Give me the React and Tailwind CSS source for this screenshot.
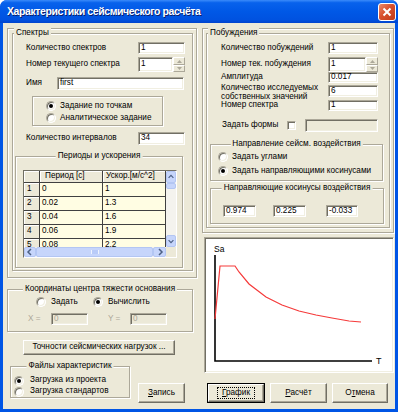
import React from 'react';

const edge = 'border border-t-[#ACA899] border-l-[#ACA899] border-b-white border-r-white shadow-[inset_1px_1px_0_#716F64,inset_-1px_-1px_0_#F1EFE2]';

function Group({ label, center, className = '', children }) {
  return (
    <div className={`relative border border-[#ACA899] shadow-[inset_1px_1px_0_#fff,1px_1px_0_#fff] ${className}`}>
      {label && (
        <span
          className={`absolute -top-[6px] bg-[#ECE9D8] px-[2px] leading-[10px] whitespace-nowrap ${
            center ? 'left-1/2 -translate-x-1/2' : 'left-[1px]'
          }`}
        >
          {label}
        </span>
      )}
      {children}
    </div>
  );
}

function Edit({ value = '', disabled, className = '' }) {
  return (
    <div
      className={`${edge} flex items-center pl-[2px] overflow-hidden whitespace-nowrap ${
        disabled ? 'bg-[#ECE9D8] text-[#ACA899]' : 'bg-white'
      } ${className}`}
    >
      {value}
    </div>
  );
}

function Radio({ checked }) {
  return (
    <div className="w-[10px] h-[10px] shrink-0 rounded-full bg-white border border-t-[#ACA899] border-l-[#ACA899] border-b-white border-r-white shadow-[inset_1px_1px_0_#716F64,inset_-1px_-1px_0_#F1EFE2] flex items-center justify-center">
      {checked && <div className="w-[4px] h-[4px] rounded-full bg-black" />}
    </div>
  );
}

function Btn({ children, def, className = '' }) {
  const face = (
    <div className="flex-1 self-stretch flex items-center justify-center bg-[#ECE9D8] border border-t-white border-l-white border-b-[#716F64] border-r-[#716F64] shadow-[inset_-1px_-1px_0_#ACA899]">
      {def ? <span className="border border-dotted border-black px-[4px] leading-[10px]">{children}</span> : children}
    </div>
  );
  return (
    <div className={`flex ${def ? 'border border-black' : ''} ${className}`}>{face}</div>
  );
}

function SpinHalf({ up, h }) {
  return (
    <div className={`${h} flex items-center justify-center bg-[#ECE9D8] border border-t-white border-l-white border-b-[#ACA899] border-r-[#ACA899]`}>
      <svg width="5" height="3" viewBox="0 0 5 3">
        <path d={up ? 'M0 3 L2.5 0 L5 3 Z' : 'M0 0 L2.5 3 L5 0 Z'} fill="#ACA899" />
      </svg>
    </div>
  );
}

function Spin() {
  return (
    <div className="w-[12px] h-[15px] flex flex-col">
      <SpinHalf up h="h-[8px]" />
      <SpinHalf h="h-[7px]" />
    </div>
  );
}

function ScrollBtn({ dir, className = '' }) {
  const d = {
    up: 'M2 6 L5 3 L8 6',
    down: 'M2 4 L5 7 L8 4',
    left: 'M6 2 L3 5 L6 8',
    right: 'M4 2 L7 5 L4 8',
  }[dir];
  return (
    <div className={`rounded-[2px] bg-[#C6D5FB] border border-[#B3C6F3] flex items-center justify-center ${className}`}>
      <svg width="10" height="10" viewBox="0 0 10 10">
        <path d={d} fill="none" stroke="#4D6185" strokeWidth="1.5" />
      </svg>
    </div>
  );
}

function Grid() {
  const rows = [
    ['1', '0', '1'],
    ['2', '0.02', '1.3'],
    ['3', '0.04', '1.6'],
    ['4', '0.06', '1.9'],
    ['5', '0.08', '2.2'],
  ];
  const hd = 'bg-[#ECE9D8] border-r border-b border-[#404040] shadow-[inset_1px_1px_0_#fff] flex items-center';
  const cell = 'bg-[#FFFDE3] border-r border-b border-[#404040] flex items-center pl-[2px]';
  return (
    <div className="w-[154px] h-[88px] border border-t-[#716F64] border-l-[#716F64] border-b-white border-r-white flex flex-col bg-[#ECE9D8]">
      <div className="flex h-[76px]">
        <div className="w-[142px] h-[76px] overflow-hidden bg-white">
          <div className="flex h-[12px]">
            <div className={`${hd} w-[16px]`} />
            <div className={`${hd} w-[63px] pl-[5px]`}>Период [c]</div>
            <div className={`${hd} w-[63px] pl-[3px]`}>Ускор.[м/с^2]</div>
          </div>
          {rows.map((r) => (
            <div key={r[0]} className="flex h-[14px]">
              <div className={`${hd} w-[16px] pl-[3px]`}>{r[0]}</div>
              <div className={`${cell} w-[63px]`}>{r[1]}</div>
              <div className={`${cell} w-[63px]`}>{r[2]}</div>
            </div>
          ))}
        </div>
        <div className="w-[10px] h-[76px] flex flex-col bg-[#F4F3EE]">
          <ScrollBtn dir="up" className="h-[12px]" />
          <div className="h-[6px] rounded-[2px] bg-[#C6D5FB] border border-[#B3C6F3]" />
          <div className="flex-1" />
          <ScrollBtn dir="down" className="h-[12px]" />
        </div>
      </div>
      <div className="flex h-[10px]">
        <div className="w-[142px] flex bg-[#F4F3EE]">
          <ScrollBtn dir="left" className="w-[12px]" />
          <div className="flex-1 rounded-[2px] bg-[#C6D5FB] border border-[#B3C6F3] flex items-center justify-center">
            <div className="w-[8px] h-[4px] border-x border-[#EEF3FE] bg-[#B9CBF8]" />
          </div>
          <ScrollBtn dir="right" className="w-[13px]" />
        </div>
        <div className="w-[10px] bg-[#ECE9D8]" />
      </div>
    </div>
  );
}

function Chart() {
  const curve = [
    [216, 320], [221, 267], [236, 267], [240, 273], [250, 285], [267, 298], [283, 306],
    [300, 312], [317, 316], [333, 319], [350, 322], [362, 323],
  ];
  return (
    <div className={`${edge} ml-[2px] mt-[4px] w-[190px] h-[136px] bg-white`}>
      <svg width="186" height="132" viewBox="206 239 186 132" className="block">
        <text x="215" y="253" fontSize="8.5" fontFamily="Liberation Sans, Arial, sans-serif">Sa</text>
        <path d="M216 256 V362 H373" fill="none" stroke="#000" strokeWidth="1.6" />
        <text x="377" y="365" fontSize="9" fontFamily="Liberation Sans, Arial, sans-serif">T</text>
        <polyline points={curve.map((p) => p.join(',')).join(' ')} fill="none" stroke="#F53A3A" strokeWidth="1.2" />
      </svg>
    </div>
  );
}

export default function App() {
  return (
    <div className="w-[398px] h-[412px] flex flex-col rounded-t-[7px] overflow-hidden bg-[#0055E5] font-['Liberation_Sans',Arial,sans-serif] text-[8.2px] leading-none text-black">
      {/* title bar */}
      <div className="h-[23px] flex items-center justify-between pl-[7px] pr-[2px] bg-[linear-gradient(#3B8BFA_0%,#0862EC_12%,#0058E6_50%,#0052E0_85%,#0043CE_100%)]">
        <span className="text-white font-bold text-[10.5px] tracking-[-0.4px] [text-shadow:1px_1px_0_#0A1E6B]">
          Характеристики сейсмического расчёта
        </span>
        <div className="w-[18px] h-[18px] rounded-[3px] border border-white bg-[linear-gradient(135deg,#EA8A6C,#D8512E_45%,#C23B18)] flex items-center justify-center">
          <svg width="10" height="10" viewBox="0 0 10 10">
            <path d="M1.5 1.5 L8.5 8.5 M8.5 1.5 L1.5 8.5" stroke="#fff" strokeWidth="2" />
          </svg>
        </div>
      </div>

      {/* client */}
      <div className="mx-[3px] h-[386px] bg-[#ECE9D8] flex pl-[4px] pt-[5px]">
        {/* left column */}
        <div className="w-[190px] flex flex-col">
          <div className="h-[250px] border border-[#ACA899] shadow-[inset_1px_1px_0_#fff,1px_1px_0_#fff] pl-[4px] pt-[4px]">
            <Group label="Спектры" className="w-[181px] h-[238px] flex flex-col">
              <div className="mt-[8px] h-[12px] flex items-center pl-[13px]">
                <span className="w-[112px]">Количество спектров</span>
                <Edit value="1" className="w-[47px] h-[12px]" />
              </div>
              <div className="mt-[3px] h-[15px] flex items-center pl-[13px]">
                <span className="w-[112px]">Номер текущего спектра</span>
                <Edit value="1" className="w-[35px] h-[15px]" />
                <Spin />
              </div>
              <div className="mt-[5px] h-[13px] flex items-center pl-[13px]">
                <span className="w-[31px]">Имя</span>
                <Edit value="first" className="w-[127px] h-[13px]" />
              </div>
              <Group className="mt-[6px] ml-[19px] w-[131px] h-[30px] flex flex-col pt-[3px] pl-[13px]">
                <div className="h-[12px] flex items-center gap-[4px]">
                  <Radio checked />
                  <span>Задание по точкам</span>
                </div>
                <div className="h-[12px] flex items-center gap-[4px]">
                  <Radio />
                  <span>Аналитическое задание</span>
                </div>
              </Group>
              <div className="mt-[6px] h-[13px] flex items-center pl-[13px]">
                <span className="w-[112px]">Количество интервалов</span>
                <Edit value="34" className="w-[47px] h-[13px]" />
              </div>
              <Group label="Периоды и ускорения" center className="mt-[11px] ml-[2px] w-[168px] h-[112px] pt-[13px] pl-[7px]">
                <Grid />
              </Group>
            </Group>
          </div>

          <Group label="Координаты центра тяжести основания" center className="mt-[11px] w-[186px] h-[43px] flex flex-col">
            <div className="mt-[6px] h-[12px] flex items-center pl-[28px]">
              <div className="w-[57px] flex items-center gap-[5px]">
                <Radio />
                <span>Задать</span>
              </div>
              <div className="flex items-center gap-[5px]">
                <Radio checked />
                <span>Вычислить</span>
              </div>
            </div>
            <div className="mt-[5px] h-[12px] flex items-center pl-[20px] text-[#ACA899]">
              <span className="w-[23px]">X =</span>
              <Edit value="0" disabled className="w-[37px] h-[12px]" />
              <span className="ml-[20px] w-[22px]">Y =</span>
              <Edit value="0" disabled className="w-[37px] h-[12px]" />
            </div>
          </Group>

          <Btn className="mt-[8px] ml-[16px] w-[152px] h-[15px]">Точности сейсмических нагрузок ...</Btn>

          <div className="mt-[11px] flex items-start">
            <Group label="Файлы характеристик" center className="ml-[3px] w-[120px] h-[32px] flex flex-col pt-[8px] pl-[3px]">
              <div className="h-[11px] flex items-center gap-[6px]">
                <Radio checked />
                <span>Загрузка из проекта</span>
              </div>
              <div className="h-[11px] flex items-center gap-[6px]">
                <Radio />
                <span>Загрузка стандартов</span>
              </div>
            </Group>
            <Btn className="ml-[8px] mt-[17px] w-[47px] h-[20px]">
              <span><u>З</u>апись</span>
            </Btn>
          </div>
        </div>

        {/* right column */}
        <div className="ml-[5px] w-[193px] flex flex-col">
          <div className="w-[192px] h-[205px] border border-[#ACA899] shadow-[inset_1px_1px_0_#fff,1px_1px_0_#fff] pl-[3px] pt-[4px]">
            <Group label="Побуждения" className="w-[184px] h-[195px] flex flex-col">
              <div className="mt-[8px] h-[12px] flex items-center pl-[14px]">
                <span className="w-[107px]">Количество побуждений</span>
                <Edit value="1" className="w-[50px] h-[12px]" />
              </div>
              <div className="mt-[3px] h-[15px] flex items-center pl-[14px]">
                <span className="w-[107px]">Номер тек. побуждения</span>
                <Edit value="1" className="w-[38px] h-[15px]" />
                <Spin />
              </div>
              <div className="h-[11px] flex items-center pl-[14px]">
                <span className="w-[107px]">Амплитуда</span>
                <Edit value="0.017" className="w-[50px] h-[11px]" />
              </div>
              <div className="mt-[1px] h-[16px] flex items-start pl-[14px]">
                <span className="w-[107px] leading-[9px] -mt-[1px]">
                  Количество исследуемых
                  <br />
                  собственных значений
                </span>
                <Edit value="6" className="mt-[1px] w-[50px] h-[12px]" />
              </div>
              <div className="h-[11px] flex items-center pl-[14px]">
                <span className="w-[107px]">Номер спектра</span>
                <Edit value="1" className="w-[50px] h-[11px]" />
              </div>
              <div className="mt-[8px] h-[13px] flex items-center pl-[15px]">
                <span className="w-[65px]">Задать формы</span>
                <div className={`${edge} w-[9px] h-[9px] bg-white`} />
                <Edit disabled className="ml-[9px] w-[73px] h-[13px]" />
              </div>
              <Group label="Направление сейсм. воздействия" center className="mt-[12px] ml-[3px] w-[173px] h-[37px] flex flex-col pt-[5px] pl-[7px]">
                <div className="h-[14px] flex items-center gap-[4px]">
                  <Radio />
                  <span>Задать углами</span>
                </div>
                <div className="h-[14px] flex items-center gap-[4px]">
                  <Radio checked />
                  <span>Задать направляющими косинусами</span>
                </div>
              </Group>
              <Group label="Направляющие косинусы воздействия" center className="mt-[7px] ml-[3px] w-[174px] h-[36px] flex pt-[16px] pl-[12px]">
                <Edit value="0.974" className="w-[33px] h-[12px]" />
                <Edit value="0.225" className="ml-[17px] w-[33px] h-[12px]" />
                <Edit value="-0.033" className="ml-[20px] w-[32px] h-[12px]" />
              </Group>
            </Group>
          </div>

          <Chart />

          <div className="mt-[10px] flex">
            <Btn def className="ml-[5px] w-[58px] h-[20px]">
              <u>Г</u>рафик
            </Btn>
            <Btn className="ml-[5px] w-[57px] h-[20px]">
              <span><u>Р</u>асчёт</span>
            </Btn>
            <Btn className="ml-[5px] w-[56px] h-[20px]">
              <span>О<u>т</u>мена</span>
            </Btn>
          </div>
        </div>
      </div>
    </div>
  );
}
